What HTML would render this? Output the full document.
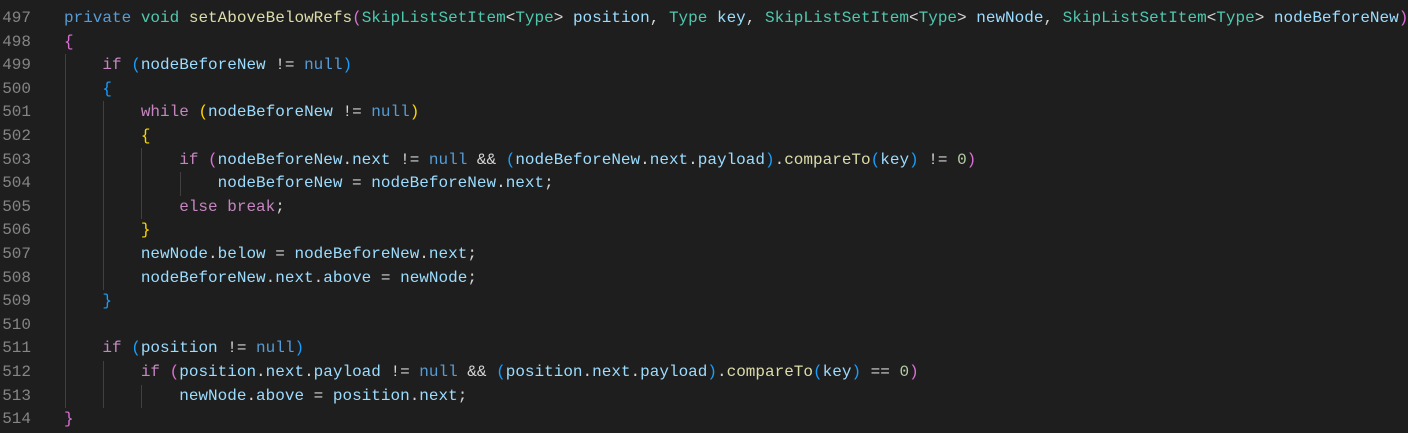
<!DOCTYPE html>
<html><head><meta charset="utf-8"><style>
html,body{margin:0;padding:0;background:#1e1e1e;width:1408px;height:433px;overflow:hidden}
.ed{position:relative;width:1408px;height:433px;font-family:"Liberation Mono",monospace;font-size:16px;color:#d4d4d4}
.l{position:absolute;left:0;height:23.6px;line-height:23.6px;white-space:pre}
.n{position:absolute;left:0;width:31px;text-align:right;color:#858585}
.c{position:absolute;left:64px}
.g{position:absolute;width:1px;background:#404040}
.k{color:#569cd6}.p{color:#c586c0}.t{color:#4ec9b0}.v{color:#9cdcfe}.f{color:#dcdcaa}.num{color:#b5cea8}
.b1{color:#ffd700}.b2{color:#da70d6}.b3{color:#179fff}
</style></head><body><div class="ed">
<div class="g" style="left:65px;top:54px;height:354px"></div>
<div class="g" style="left:103px;top:101px;height:189px"></div>
<div class="g" style="left:103px;top:361px;height:47px"></div>
<div class="g" style="left:141px;top:148px;height:71px"></div>
<div class="g" style="left:141px;top:385px;height:23px"></div>
<div class="g" style="left:180px;top:172px;height:24px"></div>

<div class="l" style="top:7px"><span class="n">497</span><span class="c"><span class="k">private</span> <span class="t">void</span> <span class="f">setAboveBelowRefs</span><span class="b2">(</span><span class="t">SkipListSetItem</span>&lt;<span class="t">Type</span>&gt; <span class="v">position</span>, <span class="t">Type</span> <span class="v">key</span>, <span class="t">SkipListSetItem</span>&lt;<span class="t">Type</span>&gt; <span class="v">newNode</span>, <span class="t">SkipListSetItem</span>&lt;<span class="t">Type</span>&gt; <span class="v">nodeBeforeNew</span><span class="b2">)</span></span></div>
<div class="l" style="top:30.6px"><span class="n">498</span><span class="c"><span class="b2">{</span></span></div>
<div class="l" style="top:54.2px"><span class="n">499</span><span class="c">    <span class="p">if</span> <span class="b3">(</span><span class="v">nodeBeforeNew</span> != <span class="k">null</span><span class="b3">)</span></span></div>
<div class="l" style="top:77.8px"><span class="n">500</span><span class="c">    <span class="b3">{</span></span></div>
<div class="l" style="top:101.4px"><span class="n">501</span><span class="c">        <span class="p">while</span> <span class="b1">(</span><span class="v">nodeBeforeNew</span> != <span class="k">null</span><span class="b1">)</span></span></div>
<div class="l" style="top:125px"><span class="n">502</span><span class="c">        <span class="b1">{</span></span></div>
<div class="l" style="top:148.6px"><span class="n">503</span><span class="c">            <span class="p">if</span> <span class="b2">(</span><span class="v">nodeBeforeNew</span>.<span class="v">next</span> != <span class="k">null</span> &amp;&amp; <span class="b3">(</span><span class="v">nodeBeforeNew</span>.<span class="v">next</span>.<span class="v">payload</span><span class="b3">)</span>.<span class="f">compareTo</span><span class="b3">(</span><span class="v">key</span><span class="b3">)</span> != <span class="num">0</span><span class="b2">)</span></span></div>
<div class="l" style="top:172.2px"><span class="n">504</span><span class="c">                <span class="v">nodeBeforeNew</span> = <span class="v">nodeBeforeNew</span>.<span class="v">next</span>;</span></div>
<div class="l" style="top:195.8px"><span class="n">505</span><span class="c">            <span class="p">else</span> <span class="p">break</span>;</span></div>
<div class="l" style="top:219.4px"><span class="n">506</span><span class="c">        <span class="b1">}</span></span></div>
<div class="l" style="top:243px"><span class="n">507</span><span class="c">        <span class="v">newNode</span>.<span class="v">below</span> = <span class="v">nodeBeforeNew</span>.<span class="v">next</span>;</span></div>
<div class="l" style="top:266.6px"><span class="n">508</span><span class="c">        <span class="v">nodeBeforeNew</span>.<span class="v">next</span>.<span class="v">above</span> = <span class="v">newNode</span>;</span></div>
<div class="l" style="top:290.2px"><span class="n">509</span><span class="c">    <span class="b3">}</span></span></div>
<div class="l" style="top:313.8px"><span class="n">510</span><span class="c"></span></div>
<div class="l" style="top:337.4px"><span class="n">511</span><span class="c">    <span class="p">if</span> <span class="b3">(</span><span class="v">position</span> != <span class="k">null</span><span class="b3">)</span></span></div>
<div class="l" style="top:361px"><span class="n">512</span><span class="c">        <span class="p">if</span> <span class="b2">(</span><span class="v">position</span>.<span class="v">next</span>.<span class="v">payload</span> != <span class="k">null</span> &amp;&amp; <span class="b3">(</span><span class="v">position</span>.<span class="v">next</span>.<span class="v">payload</span><span class="b3">)</span>.<span class="f">compareTo</span><span class="b3">(</span><span class="v">key</span><span class="b3">)</span> == <span class="num">0</span><span class="b2">)</span></span></div>
<div class="l" style="top:384.6px"><span class="n">513</span><span class="c">            <span class="v">newNode</span>.<span class="v">above</span> = <span class="v">position</span>.<span class="v">next</span>;</span></div>
<div class="l" style="top:408.2px"><span class="n">514</span><span class="c"><span class="b2">}</span></span></div>
</div></body></html>
